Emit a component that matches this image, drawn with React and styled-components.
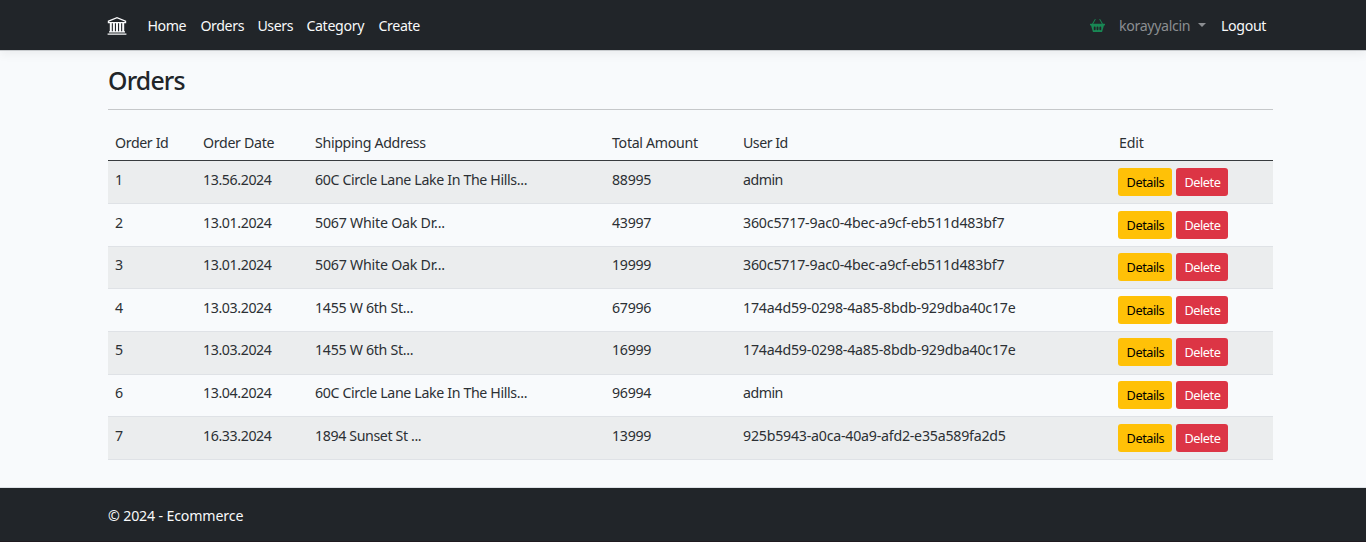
import React from 'react';
import styled, { createGlobalStyle } from 'styled-components';
import { BsBasket2Fill } from 'react-icons/bs';

const Global = createGlobalStyle`
  *, *::before, *::after { box-sizing: border-box; }
  body {
    margin: 0;
    background: #f8f9fa;
    color: #212529;
    font: 400 14.2px/21.6px "Noto Sans", "Open Sans", sans-serif;
  }
`;

const Page = styled.div`
  display: flex;
  flex-direction: column;
  height: 542px;
  overflow: hidden;
  background: #f8fafc;
`;

const Navbar = styled.header`
  flex: none;
  display: flex;
  align-items: center;
  height: 51px;
  padding: 2px 99px 0 107px;
  background: #212529;
  border-bottom: 1px solid #c9cccf;
  box-shadow: 0 3px 10px rgba(0, 0, 0, 0.06);
`;

const Brand = styled.a`
  display: flex;
  width: 40.4px;
  color: #f8f9fa;
`;

const NavLinks = styled.nav`
  display: flex;
  gap: 14px;
  flex: 1;
`;

const NavLink = styled.a`
  width: ${(p) => p.$w}px;
  white-space: nowrap;
  letter-spacing: ${(p) => p.$ls || 0}px;
  font-weight: 400;
  color: ${(p) => (p.$muted ? '#8b8e91' : '#f8f9fa')};
`;

const Account = styled.div`
  display: flex;
  align-items: center;
`;

const BasketIcon = styled(BsBasket2Fill)`
  width: 15px;
  height: 15px;
  margin: 0 14px 1px 0;
  color: #198754;
`;

const Caret = styled.span`
  margin: 0 15px 2px 8px;
  border: 4px solid transparent;
  border-top-color: #8b8e91;
  border-bottom: 0;
`;

const Main = styled.main`
  flex: 1;
  padding: 0 93px 0 108px;
`;

const Title = styled.h1`
  margin: 13px 0 0;
  height: 45px;
  font-size: 24.8px;
  line-height: 33px;
  font-weight: 500;
  letter-spacing: -0.8px;
`;

const Rule = styled.hr`
  margin: 0 0 15.3px;
  border: 0;
  border-top: 1px solid #c6c8ca;
`;

const Table = styled.table`
  width: 1165px;
  table-layout: fixed;
  border-collapse: separate;
  border-spacing: 0;
  color: #2c3034;
`;

const HeadCell = styled.th`
  width: ${(p) => p.$w}px;
  height: 36px;
  padding: 0 7px;
  border-bottom: 1px solid #373b3e;
  text-align: left;
  font-weight: 400;
  white-space: nowrap;
  letter-spacing: ${(p) => p.$ls || 0}px;
`;

const Row = styled.tr`
  height: 42.65px;
  background: ${(p) => (p.$striped ? '#ebedee' : 'transparent')};
`;

const Cell = styled.td`
  padding: 7.6px 7px 0;
  vertical-align: top;
  border-bottom: 1px solid #dfe2e6;
  white-space: nowrap;
  letter-spacing: ${(p) => p.$ls || 0}px;
`;

const Actions = styled.div`
  display: flex;
  gap: 4px;
  margin: -1px 0 0 -0.6px;
`;

const Button = styled.button`
  width: ${(p) => p.$w}px;
  height: 28px;
  padding: 1px 0 0;
  border: 0;
  border-radius: 3px;
  font: 400 12.7px/27px "Noto Sans", "Open Sans", sans-serif;
  letter-spacing: -0.45px;
  color: ${(p) => (p.$danger ? '#fff' : '#000')};
  background: ${(p) => (p.$danger ? '#dc3545' : '#ffc107')};
`;

const Footer = styled.footer`
  flex: none;
  height: 55px;
  padding: 17px 108px 0;
  border-top: 1px solid #dee2e6;
  border-bottom: 1px solid #1f1a20;
  background: #212529;
  color: #f8f9fa;
  letter-spacing: -0.16px;
`;

const BankLogo = () => (
  <svg width="20" height="20" viewBox="0 0 20 20" fill="none" stroke="currentColor">
    <path strokeWidth="1.4" d="M1.5 5.2 L10 1.7 L18.5 5.2 V6.6 H1.5 Z M2 15.9H18 M.6 18.1H19.4" />
    <path strokeWidth="2" d="M3.8 7V16 M6.9 7V16 M10 7V16 M13.1 7V16 M16.2 7V16" />
  </svg>
);

const columns = [
  ['Order Id', 88, -0.38],
  ['Order Date', 112, -0.32],
  ['Shipping Address', 297, -0.34],
  ['Total Amount', 131, -0.3],
  ['User Id', 376, -0.5],
  ['Edit', 161, -0.2],
];

const HILLS = { text: '60C Circle Lane Lake In The Hills...', ls: -0.36 };
const OAK = { text: '5067 White Oak Dr...', ls: -0.22 };
const SIXTH = { text: '1455 W 6th St...', ls: -0.3 };
const SUNSET = { text: '1894 Sunset St ...', ls: -0.38 };

const ADMIN = { text: 'admin', ls: -0.5 };
const USER_A = { text: '360c5717-9ac0-4bec-a9cf-eb511d483bf7', ls: -0.19 };
const USER_B = { text: '174a4d59-0298-4a85-8bdb-929dba40c17e', ls: -0.2 };
const USER_C = { text: '925b5943-a0ca-40a9-afd2-e35a589fa2d5', ls: -0.23 };

const orders = [
  ['1', '13.56.2024', HILLS, '88995', ADMIN],
  ['2', '13.01.2024', OAK, '43997', USER_A],
  ['3', '13.01.2024', OAK, '19999', USER_A],
  ['4', '13.03.2024', SIXTH, '67996', USER_B],
  ['5', '13.03.2024', SIXTH, '16999', USER_B],
  ['6', '13.04.2024', HILLS, '96994', ADMIN],
  ['7', '16.33.2024', SUNSET, '13999', USER_C],
];

export default function App() {
  return (
    <Page>
      <Global />
      <Navbar>
        <Brand><BankLogo /></Brand>
        <NavLinks>
          <NavLink $w={39} $ls={-0.4}>Home</NavLink>
          <NavLink $w={43} $ls={-0.4}>Orders</NavLink>
          <NavLink $w={35} $ls={-0.4}>Users</NavLink>
          <NavLink $w={58} $ls={-0.35}>Category</NavLink>
          <NavLink $w={42} $ls={-0.35}>Create</NavLink>
        </NavLinks>
        <Account>
          <BasketIcon />
          <NavLink $muted $w={71} $ls={-0.35}>korayyalcin</NavLink>
          <Caret />
          <NavLink $w={46} $ls={-0.35}>Logout</NavLink>
        </Account>
      </Navbar>
      <Main>
        <Title>Orders</Title>
        <Rule />
        <Table>
          <thead>
            <tr>
              {columns.map(([label, w, ls]) => <HeadCell key={label} $w={w} $ls={ls}>{label}</HeadCell>)}
            </tr>
          </thead>
          <tbody>
            {orders.map(([id, date, address, total, user], i) => (
              <Row key={id} $striped={i % 2 === 0}>
                <Cell>{id}</Cell>
                <Cell $ls={-0.4}>{date}</Cell>
                <Cell $ls={address.ls}>{address.text}</Cell>
                <Cell $ls={-0.3}>{total}</Cell>
                <Cell $ls={user.ls}>{user.text}</Cell>
                <Cell>
                  <Actions>
                    <Button $w={54}>Details</Button>
                    <Button $w={52} $danger>Delete</Button>
                  </Actions>
                </Cell>
              </Row>
            ))}
          </tbody>
        </Table>
      </Main>
      <Footer>© 2024 - Ecommerce</Footer>
    </Page>
  );
}
